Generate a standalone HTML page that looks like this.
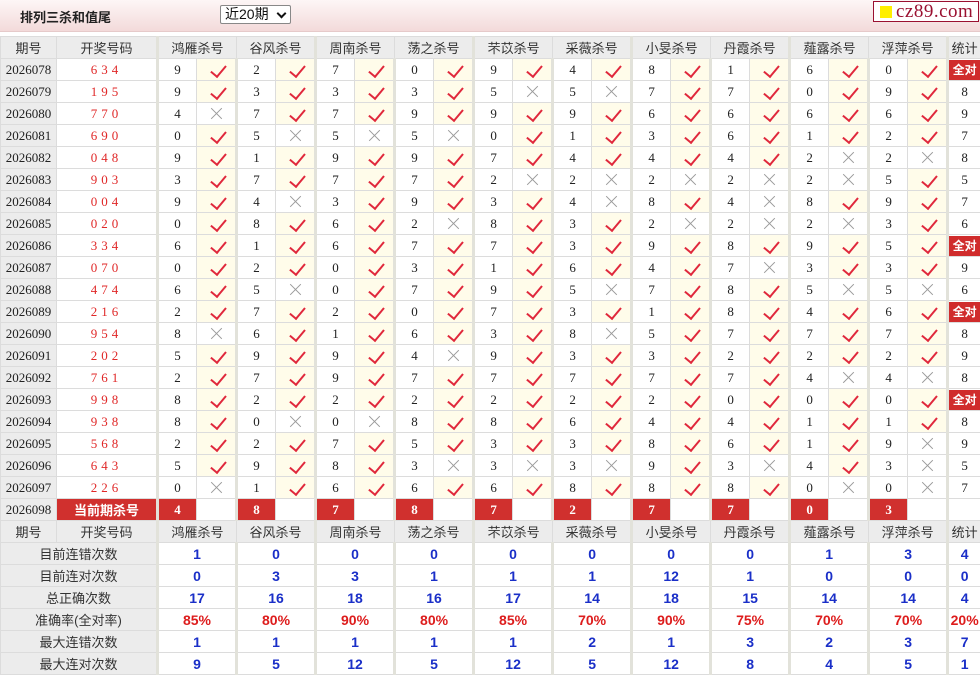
<!DOCTYPE html>
<html><head><meta charset="utf-8">
<style>
*{margin:0;padding:0;box-sizing:border-box}
body{width:980px;height:675px;overflow:hidden;background:#fff;font-family:"Liberation Sans","Noto Sans CJK SC",sans-serif;font-size:13px;color:#222;position:relative}
.bar{position:absolute;left:0;top:0;width:980px;height:32px;background:linear-gradient(#fdf6f6,#f3dada);border-bottom:1px solid #e6caca}
.title{position:absolute;left:20px;top:7px;font-weight:bold;font-size:13px;color:#222}
.sel{position:absolute;left:220px;top:5px;width:71px;height:19px;border:1px solid #888;border-radius:2px;background:#fff;font-size:14px;padding-left:4px;line-height:17px;color:#111}
.sel i{position:absolute;right:5px;top:4px;width:7px;height:7px;border-right:2px solid #111;border-bottom:2px solid #111;transform:rotate(45deg)}
.logo{position:absolute;left:873px;top:1px;width:106px;height:21px;border:1px solid #9a1030;background:#fff}
.logo b{position:absolute;left:6px;top:4px;width:12px;height:12px;background:#ffef00}
.logo span{position:absolute;left:22px;top:-1px;font-family:"Liberation Serif",serif;font-size:19px;color:#9a1030;letter-spacing:0.5px}
table{position:absolute;left:0;top:36px;border-collapse:collapse;table-layout:fixed;width:980px}
td{height:22px;border:1px solid #dcdcdc;text-align:center;padding:0;font-family:"Liberation Serif","Noto Serif CJK SC",serif;font-size:13px;position:relative}
tr.d td:nth-child(2n+3){border-left:3px solid #e2e2da}
tr.d td:first-child{background:#ececec;font-size:13px}
tr.h td{background:#ececec;font-family:"Liberation Sans","Noto Sans CJK SC",sans-serif;color:#333}
tr.h td:nth-child(2n+3){border-left:3px solid #e2e2da}
td.n{color:#e02828;letter-spacing:4px}
td.y{background:#fffcea}
td.y::after{content:"";position:absolute;left:17px;top:3px;width:7px;height:13px;border-right:2px solid #e0283c;border-bottom:2px solid #e0283c;transform:rotate(40deg)}
td.x::before,td.x::after{content:"";position:absolute;left:12px;top:10px;width:15px;height:1px;background:#999;transform:rotate(45deg)}
td.x::after{transform:rotate(-45deg)}
td.q span{display:inline-block;background:#d02c2c;color:#fff;font-weight:bold;font-family:"Liberation Sans","Noto Sans CJK SC",sans-serif;font-size:12px;width:31px;height:20px;line-height:20px}
td.q{padding:0}
tr.c td.r{background:#d0302e;color:#fff;font-weight:bold}
tr.c td.cur{background:#d0302e;color:#fff;font-weight:bold;font-family:"Liberation Sans","Noto Sans CJK SC",sans-serif}
tr.s td{font-family:"Liberation Sans",sans-serif;font-weight:bold;color:#1a2fc8;font-size:14px;border-left:3px solid #e2e2da}
tr.s td:first-child{background:#ececec;font-weight:normal;color:#333;font-family:"Liberation Sans","Noto Sans CJK SC",sans-serif;font-size:13px;border-left:1px solid #dcdcdc}
tr.p td{color:#dd1c1c}
</style></head><body>
<div class="bar"><div class="title">排列三杀和值尾</div><div class="sel">近20期<i></i></div><div class="logo"><b></b><span>cz89.com</span></div></div>
<table>
<colgroup><col style="width:56px"><col style="width:101px"><col style="width:39px"><col style="width:40px"><col style="width:39px"><col style="width:40px"><col style="width:39px"><col style="width:40px"><col style="width:39px"><col style="width:40px"><col style="width:39px"><col style="width:40px"><col style="width:39px"><col style="width:40px"><col style="width:39px"><col style="width:40px"><col style="width:39px"><col style="width:40px"><col style="width:39px"><col style="width:40px"><col style="width:39px"><col style="width:40px"><col style="width:33px"></colgroup>
<tr class="h"><td>期号</td><td>开奖号码</td><td colspan="2">鸿雁杀号</td><td colspan="2">谷风杀号</td><td colspan="2">周南杀号</td><td colspan="2">荡之杀号</td><td colspan="2">芣苡杀号</td><td colspan="2">采薇杀号</td><td colspan="2">小旻杀号</td><td colspan="2">丹霞杀号</td><td colspan="2">薤露杀号</td><td colspan="2">浮萍杀号</td><td>统计</td></tr>
<tr class="d"><td>2026078</td><td class="n">634</td><td>9</td><td class="y"></td><td>2</td><td class="y"></td><td>7</td><td class="y"></td><td>0</td><td class="y"></td><td>9</td><td class="y"></td><td>4</td><td class="y"></td><td>8</td><td class="y"></td><td>1</td><td class="y"></td><td>6</td><td class="y"></td><td>0</td><td class="y"></td><td class="q"><span>全对</span></td></tr>
<tr class="d"><td>2026079</td><td class="n">195</td><td>9</td><td class="y"></td><td>3</td><td class="y"></td><td>3</td><td class="y"></td><td>3</td><td class="y"></td><td>5</td><td class="x"></td><td>5</td><td class="x"></td><td>7</td><td class="y"></td><td>7</td><td class="y"></td><td>0</td><td class="y"></td><td>9</td><td class="y"></td><td>8</td></tr>
<tr class="d"><td>2026080</td><td class="n">770</td><td>4</td><td class="x"></td><td>7</td><td class="y"></td><td>7</td><td class="y"></td><td>9</td><td class="y"></td><td>9</td><td class="y"></td><td>9</td><td class="y"></td><td>6</td><td class="y"></td><td>6</td><td class="y"></td><td>6</td><td class="y"></td><td>6</td><td class="y"></td><td>9</td></tr>
<tr class="d"><td>2026081</td><td class="n">690</td><td>0</td><td class="y"></td><td>5</td><td class="x"></td><td>5</td><td class="x"></td><td>5</td><td class="x"></td><td>0</td><td class="y"></td><td>1</td><td class="y"></td><td>3</td><td class="y"></td><td>6</td><td class="y"></td><td>1</td><td class="y"></td><td>2</td><td class="y"></td><td>7</td></tr>
<tr class="d"><td>2026082</td><td class="n">048</td><td>9</td><td class="y"></td><td>1</td><td class="y"></td><td>9</td><td class="y"></td><td>9</td><td class="y"></td><td>7</td><td class="y"></td><td>4</td><td class="y"></td><td>4</td><td class="y"></td><td>4</td><td class="y"></td><td>2</td><td class="x"></td><td>2</td><td class="x"></td><td>8</td></tr>
<tr class="d"><td>2026083</td><td class="n">903</td><td>3</td><td class="y"></td><td>7</td><td class="y"></td><td>7</td><td class="y"></td><td>7</td><td class="y"></td><td>2</td><td class="x"></td><td>2</td><td class="x"></td><td>2</td><td class="x"></td><td>2</td><td class="x"></td><td>2</td><td class="x"></td><td>5</td><td class="y"></td><td>5</td></tr>
<tr class="d"><td>2026084</td><td class="n">004</td><td>9</td><td class="y"></td><td>4</td><td class="x"></td><td>3</td><td class="y"></td><td>9</td><td class="y"></td><td>3</td><td class="y"></td><td>4</td><td class="x"></td><td>8</td><td class="y"></td><td>4</td><td class="x"></td><td>8</td><td class="y"></td><td>9</td><td class="y"></td><td>7</td></tr>
<tr class="d"><td>2026085</td><td class="n">020</td><td>0</td><td class="y"></td><td>8</td><td class="y"></td><td>6</td><td class="y"></td><td>2</td><td class="x"></td><td>8</td><td class="y"></td><td>3</td><td class="y"></td><td>2</td><td class="x"></td><td>2</td><td class="x"></td><td>2</td><td class="x"></td><td>3</td><td class="y"></td><td>6</td></tr>
<tr class="d"><td>2026086</td><td class="n">334</td><td>6</td><td class="y"></td><td>1</td><td class="y"></td><td>6</td><td class="y"></td><td>7</td><td class="y"></td><td>7</td><td class="y"></td><td>3</td><td class="y"></td><td>9</td><td class="y"></td><td>8</td><td class="y"></td><td>9</td><td class="y"></td><td>5</td><td class="y"></td><td class="q"><span>全对</span></td></tr>
<tr class="d"><td>2026087</td><td class="n">070</td><td>0</td><td class="y"></td><td>2</td><td class="y"></td><td>0</td><td class="y"></td><td>3</td><td class="y"></td><td>1</td><td class="y"></td><td>6</td><td class="y"></td><td>4</td><td class="y"></td><td>7</td><td class="x"></td><td>3</td><td class="y"></td><td>3</td><td class="y"></td><td>9</td></tr>
<tr class="d"><td>2026088</td><td class="n">474</td><td>6</td><td class="y"></td><td>5</td><td class="x"></td><td>0</td><td class="y"></td><td>7</td><td class="y"></td><td>9</td><td class="y"></td><td>5</td><td class="x"></td><td>7</td><td class="y"></td><td>8</td><td class="y"></td><td>5</td><td class="x"></td><td>5</td><td class="x"></td><td>6</td></tr>
<tr class="d"><td>2026089</td><td class="n">216</td><td>2</td><td class="y"></td><td>7</td><td class="y"></td><td>2</td><td class="y"></td><td>0</td><td class="y"></td><td>7</td><td class="y"></td><td>3</td><td class="y"></td><td>1</td><td class="y"></td><td>8</td><td class="y"></td><td>4</td><td class="y"></td><td>6</td><td class="y"></td><td class="q"><span>全对</span></td></tr>
<tr class="d"><td>2026090</td><td class="n">954</td><td>8</td><td class="x"></td><td>6</td><td class="y"></td><td>1</td><td class="y"></td><td>6</td><td class="y"></td><td>3</td><td class="y"></td><td>8</td><td class="x"></td><td>5</td><td class="y"></td><td>7</td><td class="y"></td><td>7</td><td class="y"></td><td>7</td><td class="y"></td><td>8</td></tr>
<tr class="d"><td>2026091</td><td class="n">202</td><td>5</td><td class="y"></td><td>9</td><td class="y"></td><td>9</td><td class="y"></td><td>4</td><td class="x"></td><td>9</td><td class="y"></td><td>3</td><td class="y"></td><td>3</td><td class="y"></td><td>2</td><td class="y"></td><td>2</td><td class="y"></td><td>2</td><td class="y"></td><td>9</td></tr>
<tr class="d"><td>2026092</td><td class="n">761</td><td>2</td><td class="y"></td><td>7</td><td class="y"></td><td>9</td><td class="y"></td><td>7</td><td class="y"></td><td>7</td><td class="y"></td><td>7</td><td class="y"></td><td>7</td><td class="y"></td><td>7</td><td class="y"></td><td>4</td><td class="x"></td><td>4</td><td class="x"></td><td>8</td></tr>
<tr class="d"><td>2026093</td><td class="n">998</td><td>8</td><td class="y"></td><td>2</td><td class="y"></td><td>2</td><td class="y"></td><td>2</td><td class="y"></td><td>2</td><td class="y"></td><td>2</td><td class="y"></td><td>2</td><td class="y"></td><td>0</td><td class="y"></td><td>0</td><td class="y"></td><td>0</td><td class="y"></td><td class="q"><span>全对</span></td></tr>
<tr class="d"><td>2026094</td><td class="n">938</td><td>8</td><td class="y"></td><td>0</td><td class="x"></td><td>0</td><td class="x"></td><td>8</td><td class="y"></td><td>8</td><td class="y"></td><td>6</td><td class="y"></td><td>4</td><td class="y"></td><td>4</td><td class="y"></td><td>1</td><td class="y"></td><td>1</td><td class="y"></td><td>8</td></tr>
<tr class="d"><td>2026095</td><td class="n">568</td><td>2</td><td class="y"></td><td>2</td><td class="y"></td><td>7</td><td class="y"></td><td>5</td><td class="y"></td><td>3</td><td class="y"></td><td>3</td><td class="y"></td><td>8</td><td class="y"></td><td>6</td><td class="y"></td><td>1</td><td class="y"></td><td>9</td><td class="x"></td><td>9</td></tr>
<tr class="d"><td>2026096</td><td class="n">643</td><td>5</td><td class="y"></td><td>9</td><td class="y"></td><td>8</td><td class="y"></td><td>3</td><td class="x"></td><td>3</td><td class="x"></td><td>3</td><td class="x"></td><td>9</td><td class="y"></td><td>3</td><td class="x"></td><td>4</td><td class="y"></td><td>3</td><td class="x"></td><td>5</td></tr>
<tr class="d"><td>2026097</td><td class="n">226</td><td>0</td><td class="x"></td><td>1</td><td class="y"></td><td>6</td><td class="y"></td><td>6</td><td class="y"></td><td>6</td><td class="y"></td><td>8</td><td class="y"></td><td>8</td><td class="y"></td><td>8</td><td class="y"></td><td>0</td><td class="x"></td><td>0</td><td class="x"></td><td>7</td></tr>
<tr class="d c"><td>2026098</td><td class="cur">当前期杀号</td><td class="r">4</td><td></td><td class="r">8</td><td></td><td class="r">7</td><td></td><td class="r">8</td><td></td><td class="r">7</td><td></td><td class="r">2</td><td></td><td class="r">7</td><td></td><td class="r">7</td><td></td><td class="r">0</td><td></td><td class="r">3</td><td></td><td></td></tr>
<tr class="h"><td>期号</td><td>开奖号码</td><td colspan="2">鸿雁杀号</td><td colspan="2">谷风杀号</td><td colspan="2">周南杀号</td><td colspan="2">荡之杀号</td><td colspan="2">芣苡杀号</td><td colspan="2">采薇杀号</td><td colspan="2">小旻杀号</td><td colspan="2">丹霞杀号</td><td colspan="2">薤露杀号</td><td colspan="2">浮萍杀号</td><td>统计</td></tr>
<tr class="s"><td colspan="2">目前连错次数</td><td colspan="2">1</td><td colspan="2">0</td><td colspan="2">0</td><td colspan="2">0</td><td colspan="2">0</td><td colspan="2">0</td><td colspan="2">0</td><td colspan="2">0</td><td colspan="2">1</td><td colspan="2">3</td><td>4</td></tr>
<tr class="s"><td colspan="2">目前连对次数</td><td colspan="2">0</td><td colspan="2">3</td><td colspan="2">3</td><td colspan="2">1</td><td colspan="2">1</td><td colspan="2">1</td><td colspan="2">12</td><td colspan="2">1</td><td colspan="2">0</td><td colspan="2">0</td><td>0</td></tr>
<tr class="s"><td colspan="2">总正确次数</td><td colspan="2">17</td><td colspan="2">16</td><td colspan="2">18</td><td colspan="2">16</td><td colspan="2">17</td><td colspan="2">14</td><td colspan="2">18</td><td colspan="2">15</td><td colspan="2">14</td><td colspan="2">14</td><td>4</td></tr>
<tr class="s p"><td colspan="2">准确率(全对率)</td><td colspan="2">85%</td><td colspan="2">80%</td><td colspan="2">90%</td><td colspan="2">80%</td><td colspan="2">85%</td><td colspan="2">70%</td><td colspan="2">90%</td><td colspan="2">75%</td><td colspan="2">70%</td><td colspan="2">70%</td><td>20%</td></tr>
<tr class="s"><td colspan="2">最大连错次数</td><td colspan="2">1</td><td colspan="2">1</td><td colspan="2">1</td><td colspan="2">1</td><td colspan="2">1</td><td colspan="2">2</td><td colspan="2">1</td><td colspan="2">3</td><td colspan="2">2</td><td colspan="2">3</td><td>7</td></tr>
<tr class="s"><td colspan="2">最大连对次数</td><td colspan="2">9</td><td colspan="2">5</td><td colspan="2">12</td><td colspan="2">5</td><td colspan="2">12</td><td colspan="2">5</td><td colspan="2">12</td><td colspan="2">8</td><td colspan="2">4</td><td colspan="2">5</td><td>1</td></tr>
</table>
</body></html>
